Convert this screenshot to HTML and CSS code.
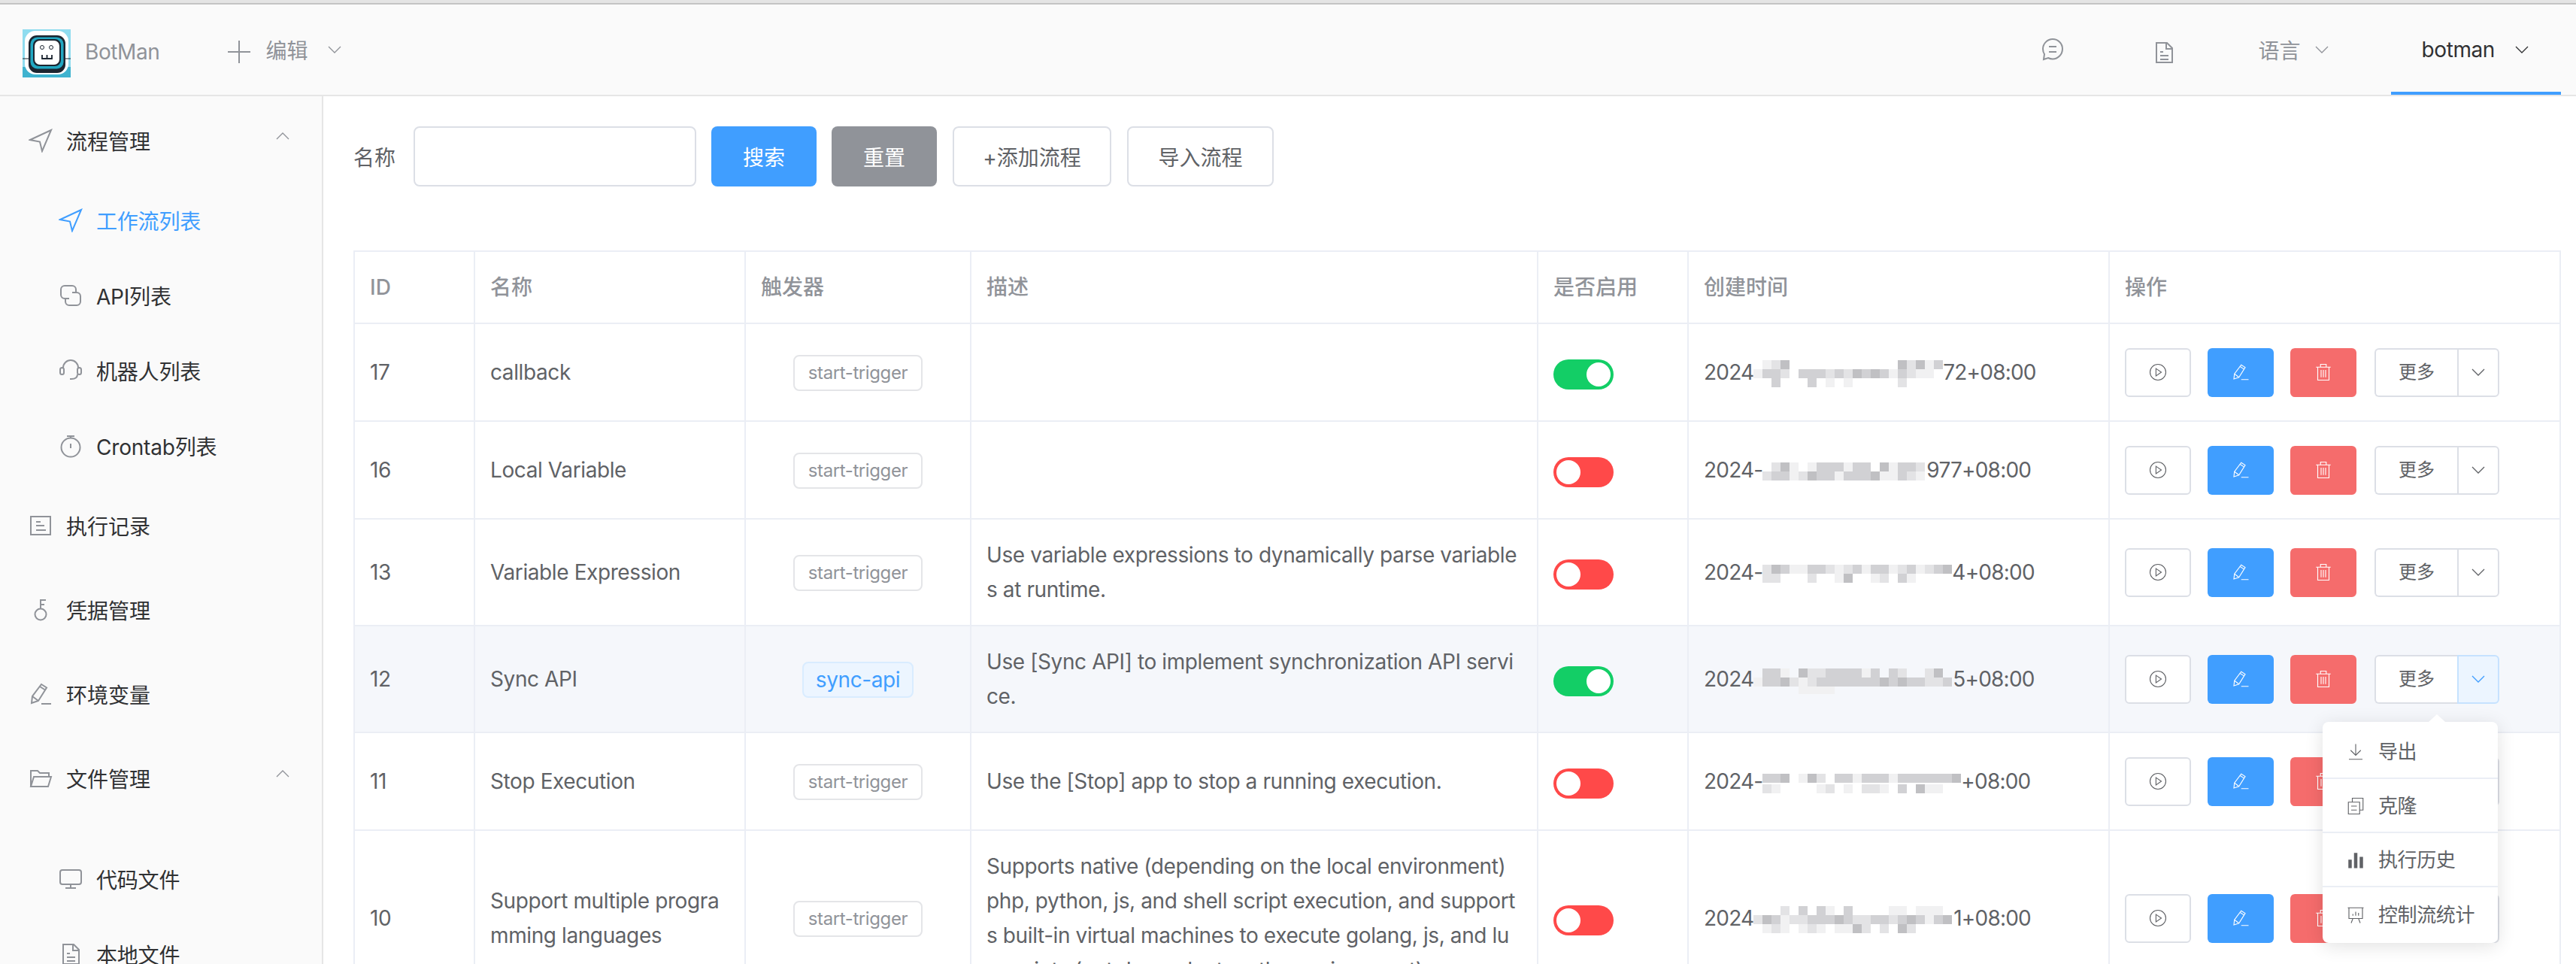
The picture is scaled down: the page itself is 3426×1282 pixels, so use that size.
FILE: index.html
```html
<!DOCTYPE html>
<html lang="zh-CN">
<head>
    <meta charset="UTF-8">
    <title>BotMan</title>
    <link rel="stylesheet" href="styles.css">
</head>
<body>
<svg class="sprite" xmlns="http://www.w3.org/2000/svg">
    <symbol id="i-nav" viewBox="0 0 32 32"><path d="M30 2 2 15l13 2.500L18 30z"/></symbol>
    <symbol id="i-link" viewBox="0 0 32 32"><path d="M14 20H8a5 5 0 0 1-5-5V8a5 5 0 0 1 5-5h10a5 5 0 0 1 5 5v4"/><path d="M18 12h6a5 5 0 0 1 5 5v7a5 5 0 0 1-5 5H14a5 5 0 0 1-5-5v-4"/></symbol>
    <symbol id="i-headset" viewBox="0 0 32 32"><path d="M6 12a10 10 0 0 1 20 0"/><rect x="2" y="12" width="5" height="9" rx="2.500"/><rect x="25" y="12" width="5" height="9" rx="2.500"/><path d="M25 21c0 4-3 6-8 6h-2"/></symbol>
    <symbol id="i-timer" viewBox="0 0 32 32"><circle cx="16" cy="18" r="12.500"/><path d="M11 3h10M16 3v3M16 13v6"/></symbol>
    <symbol id="i-tickets" viewBox="0 0 32 32"><path d="M3 4h26v24H3z"/><path d="M10 11h6M10 16h11M10 22h13"/></symbol>
    <symbol id="i-key" viewBox="0 0 32 32"><circle cx="16" cy="22" r="7.500"/><path d="M16 14V3h7M16 9h5"/></symbol>
    <symbol id="i-pencil" viewBox="0 0 32 32"><path d="M17 3l7 4.500L13 25l-9 3 1-9z"/><path d="M5 19l8 6M15 6l7 4.500M17 29h13"/></symbol>
    <symbol id="i-folder" viewBox="0 0 32 32"><path d="M3 27V6h9l3 3h12v5"/><path d="M3 27h23l4-13H7z"/></symbol>
    <symbol id="i-monitor" viewBox="0 0 32 32"><rect x="2" y="4" width="28" height="19" rx="3"/><path d="M16 23v5M9 28h14"/></symbol>
    <symbol id="i-doc" viewBox="0 0 32 32"><path d="M6 3h14l7 7v19H6z"/><path d="M19 3v8h8M11 15h4M11 20h11M11 25h11"/></symbol>
    <symbol id="i-chat" viewBox="0 0 32 32"><path d="M16 2C9 2 3 8 3 15c0 3 .500 5 2 7l-1 7 6-2c2 1 4 1.500 6 1.500 7 0 13-6 13-13.500S23 2 16 2z"/><path d="M11 12h10M11 19h10"/></symbol>
    <symbol id="i-play" viewBox="0 0 32 32"><circle cx="16" cy="16" r="14"/><path d="M12.500 9.500 22 16l-9.500 6.500z"/></symbol>
    <symbol id="i-trash" viewBox="0 0 32 32"><path d="M3 7h26M11 7V2h10v5M6 7v23h20V7M12 12v13M16 12v13M20 12v13"/></symbol>
    <symbol id="i-down" viewBox="0 0 18 10"><path d="M1 1l8 8 8-8"/></symbol>
    <symbol id="i-up" viewBox="0 0 18 10"><path d="M1 9l8-8 8 8"/></symbol>
    <symbol id="i-plus" viewBox="0 0 30 30"><path d="M15 0v30M0 15h30"/></symbol>
    <symbol id="i-download" viewBox="0 0 32 32"><path d="M16 2v20M7 13l9 9 9-9M4 29h24"/></symbol>
    <symbol id="i-copy" viewBox="0 0 32 32"><path d="M3 9h20v21H3z"/><path d="M10 9V2h19v21h-6M8 16h10M8 23h10"/></symbol>
    <symbol id="i-board" viewBox="0 0 32 32"><path d="M2 3h28M4 3v19h24V3M11 22l-3 8M21 22l3 8M11 17v-3M16 17v-7M21 17v-5"/></symbol>
</svg>

<div class="top-line"></div>

<header class="header">
    <svg class="logo" viewBox="0 0 64 64">
        <rect width="64" height="64" fill="#8fdcef"/>
        <rect y="50" width="64" height="14" fill="#3fb3cf"/>
        <rect x="3" y="2" width="58" height="58" rx="14" fill="#fff"/>
        <path d="M0 39h64" stroke="#1c2530" stroke-width="1"/>
        <rect x="8" y="8" width="49" height="50" rx="11" fill="#1c2530"/>
        <rect x="10.500" y="10.500" width="44" height="42" rx="9" fill="#22a7c2"/>
        <rect x="14" y="13" width="37" height="36" rx="8" fill="#1c2530"/>
        <rect x="16" y="15" width="33" height="32" rx="7" fill="#fff"/>
        <circle cx="26" cy="24" r="2.500" fill="#fff" stroke="#1c2530"/>
        <circle cx="38" cy="24" r="2.500" fill="#fff" stroke="#1c2530"/>
        <path d="M26 34v5h13v-5M32.500 34v5" fill="none" stroke="#1c2530" stroke-width="1.800"/>
    </svg>
    <span class="brand">BotMan</span>
    <svg class="icon header-plus"><use href="#i-plus"/></svg>
    <span class="header-edit">编辑</span>
    <svg class="icon chev"><use href="#i-down"/></svg>

    <div class="header-right">
        <svg class="icon header-chat"><use href="#i-chat"/></svg>
        <svg class="icon header-doc"><use href="#i-doc"/></svg>
        <div class="header-lang">语言 <svg class="icon chev"><use href="#i-down"/></svg></div>
        <div class="header-user">botman <svg class="icon chev"><use href="#i-down"/></svg></div>
    </div>
</header>

<div class="layout">
    <aside class="sidebar">
        <div class="menu-title"><svg class="icon menu-icon"><use href="#i-nav"/></svg>流程管理<svg class="icon menu-arrow"><use href="#i-up"/></svg></div>
        <div class="menu-sub active"><svg class="icon menu-icon"><use href="#i-nav"/></svg>工作流列表</div>
        <div class="menu-sub"><svg class="icon menu-icon"><use href="#i-link"/></svg>API列表</div>
        <div class="menu-sub"><svg class="icon menu-icon"><use href="#i-headset"/></svg>机器人列表</div>
        <div class="menu-sub"><svg class="icon menu-icon"><use href="#i-timer"/></svg>Crontab列表</div>
        <div class="menu-title"><svg class="icon menu-icon"><use href="#i-tickets"/></svg>执行记录</div>
        <div class="menu-title"><svg class="icon menu-icon"><use href="#i-key"/></svg>凭据管理</div>
        <div class="menu-title"><svg class="icon menu-icon"><use href="#i-pencil"/></svg>环境变量</div>
        <div class="menu-title"><svg class="icon menu-icon"><use href="#i-folder"/></svg>文件管理<svg class="icon menu-arrow"><use href="#i-up"/></svg></div>
        <div class="menu-group-gap"></div>
        <div class="menu-sub"><svg class="icon menu-icon"><use href="#i-monitor"/></svg>代码文件</div>
        <div class="menu-sub"><svg class="icon menu-icon"><use href="#i-doc"/></svg>本地文件</div>
    </aside>

    <main class="main">
        <div class="filter">
            <label class="filter-label">名称</label>
            <input class="filter-input" type="text">
            <button class="btn btn-primary">搜索</button>
            <button class="btn btn-grey">重置</button>
            <button class="btn btn-plain btn-add">+添加流程</button>
            <button class="btn btn-plain btn-import">导入流程</button>
        </div>

        <table class="flow-table">
            <colgroup>
                <col class="c-id"><col class="c-name"><col class="c-trigger"><col class="c-desc"><col class="c-on"><col class="c-time"><col class="c-op">
            </colgroup>
            <thead>
                <tr><th>ID</th><th>名称</th><th>触发器</th><th>描述</th><th>是否启用</th><th>创建时间</th><th>操作</th></tr>
            </thead>
            <tbody>
                <tr>
                    <td>17</td><td>callback</td>
                    <td class="center"><span class="tag">start-trigger</span></td>
                    <td class="desc"></td>
                    <td><span class="switch on"></span></td>
                    <td class="time">2024<svg class="mosaic m17"><path class="t1" d="M12 6h12M228 6h12M0 18h12M180 18h12M216 18h24M96 30h12M120 30h12"/><path class="t2" d="M24 6h12M204 6h12M36 18h12M96 18h12M120 18h12M204 18h12M192 30h12"/><path class="t3" d="M240 6h12M12 18h24M60 18h36M108 18h12M144 18h12M168 18h12M192 18h12M24 30h12M72 30h12"/><path class="t4" d="M36 6h12M192 6h12M216 6h12M132 18h12M156 18h12"/></svg>72+08:00</td>
                    <td><div class="ops"><button class="op op-plain"><svg class="icon"><use href="#i-play"/></svg></button><button class="op op-blue"><svg class="icon"><use href="#i-pencil"/></svg></button><button class="op op-red"><svg class="icon"><use href="#i-trash"/></svg></button><div class="split"><button class="split-main">更多</button><button class="split-arrow"><svg class="icon chev-small"><use href="#i-down"/></svg></button></div></div></td>
                </tr>
                <tr>
                    <td>16</td><td>Local Variable</td>
                    <td class="center"><span class="tag">start-trigger</span></td>
                    <td class="desc"></td>
                    <td><span class="switch off"></span></td>
                    <td class="time">2024-<svg class="mosaic m16"><path class="t1" d="M36 12h12M60 12h12M108 12h12M168 12h12M36 24h12M96 24h12M156 24h24M204 24h12"/><path class="t2" d="M12 12h12M204 12h12M0 24h12M48 24h12M192 24h12"/><path class="t3" d="M72 12h36M120 12h24M180 12h24M12 24h24M72 24h24M108 24h36M180 24h12"/><path class="t4" d="M24 12h12M156 12h12M60 24h12M144 24h12"/></svg>977+08:00</td>
                    <td><div class="ops"><button class="op op-plain"><svg class="icon"><use href="#i-play"/></svg></button><button class="op op-blue"><svg class="icon"><use href="#i-pencil"/></svg></button><button class="op op-red"><svg class="icon"><use href="#i-trash"/></svg></button><div class="split"><button class="split-main">更多</button><button class="split-arrow"><svg class="icon chev-small"><use href="#i-down"/></svg></button></div></div></td>
                </tr>
                <tr>
                    <td>13</td><td>Variable Expression</td>
                    <td class="center"><span class="tag">start-trigger</span></td>
                    <td class="desc">Use variable expressions to dynamically parse variables at runtime.</td>
                    <td><span class="switch off"></span></td>
                    <td class="time">2024-<svg class="mosaic m13"><path class="t1" d="M36 12h24M96 12h12M132 12h12M168 12h12M204 12h12M96 24h12M144 24h12M192 24h12"/><path class="t2" d="M0 12h12M84 12h12M108 12h12M180 12h12M216 12h12M0 24h24M60 24h12M156 24h12"/><path class="t3" d="M24 12h12M60 12h24M120 12h12M144 12h24M192 12h12M228 12h12M180 24h12"/><path class="t4" d="M12 12h12M240 12h12M108 24h12"/></svg>4+08:00</td>
                    <td><div class="ops"><button class="op op-plain"><svg class="icon"><use href="#i-play"/></svg></button><button class="op op-blue"><svg class="icon"><use href="#i-pencil"/></svg></button><button class="op op-red"><svg class="icon"><use href="#i-trash"/></svg></button><div class="split"><button class="split-main">更多</button><button class="split-arrow"><svg class="icon chev-small"><use href="#i-down"/></svg></button></div></div></td>
                </tr>
                <tr class="hover">
                    <td>12</td><td>Sync API</td>
                    <td class="center"><span class="tag tag-api">sync-api</span></td>
                    <td class="desc">Use [Sync API] to implement synchronization API service.</td>
                    <td><span class="switch on"></span></td>
                    <td class="time">2024<svg class="mosaic m12"><path class="t1" d="M36 8h12M144 8h12M0 20h12M60 20h12M60 32h48"/><path class="t2" d="M72 8h24M192 8h12M228 8h12M48 20h12M72 20h12M228 20h24"/><path class="t3" d="M12 8h24M96 8h48M156 8h12M180 8h12M12 20h24M84 20h84M180 20h12M204 20h24M252 20h12"/><path class="t4" d="M60 8h12M240 8h12M36 20h12M168 20h12M192 20h12"/></svg>5+08:00</td>
                    <td><div class="ops"><button class="op op-plain"><svg class="icon"><use href="#i-play"/></svg></button><button class="op op-blue"><svg class="icon"><use href="#i-pencil"/></svg></button><button class="op op-red"><svg class="icon"><use href="#i-trash"/></svg></button>
                        <div class="split"><button class="split-main">更多</button><button class="split-arrow open"><svg class="icon chev-small"><use href="#i-down"/></svg></button>
                            <ul class="more-menu">
                                <li><svg class="icon"><use href="#i-download"/></svg>导出</li>
                                <li><svg class="icon"><use href="#i-copy"/></svg>克隆</li>
                                <li><svg class="icon icon-fill" viewBox="0 0 32 32"><rect x="3" y="15" width="6" height="15"/><rect x="13" y="3" width="6" height="27"/><rect x="23" y="10" width="6" height="20"/></svg>执行历史</li>
                                <li><svg class="icon"><use href="#i-board"/></svg>控制流统计</li>
                            </ul>
                        </div></div></td>
                </tr>
                <tr>
                    <td>11</td><td>Stop Execution</td>
                    <td class="center"><span class="tag">start-trigger</span></td>
                    <td class="desc">Use the [Stop] app to stop a running execution.</td>
                    <td><span class="switch off"></span></td>
                    <td class="time">2024-<svg class="mosaic m11"><path class="t1" d="M48 12h12M120 12h12M168 12h12M12 26h12M72 26h12M108 26h12M156 26h12M216 26h24"/><path class="t2" d="M72 12h12M0 26h12M84 26h12M132 26h24"/><path class="t3" d="M0 12h24M96 12h24M132 12h36M180 12h72M180 26h12"/><path class="t4" d="M24 12h12M60 12h12M252 12h12M204 26h12"/></svg>+08:00</td>
                    <td><div class="ops"><button class="op op-plain"><svg class="icon"><use href="#i-play"/></svg></button><button class="op op-blue"><svg class="icon"><use href="#i-pencil"/></svg></button><button class="op op-red"><svg class="icon"><use href="#i-trash"/></svg></button><div class="split"><button class="split-main">更多</button><button class="split-arrow"><svg class="icon chev-small"><use href="#i-down"/></svg></button></div></div></td>
                </tr>
                <tr>
                    <td>10</td><td>Support multiple programming languages</td>
                    <td class="center"><span class="tag">start-trigger</span></td>
                    <td class="desc">Supports native (depending on the local environment) php, python, js, and shell script execution, and supports built-in virtual machines to execute golang, js, and lua scripts (not dependent on the environment).</td>
                    <td><span class="switch off"></span></td>
                    <td class="time">2024<svg class="mosaic m10"><path class="t1" d="M96 6h12M180 6h24M216 6h36M36 18h12M228 18h12M12 30h12M36 30h12M60 30h12M84 30h12M108 30h24"/><path class="t2" d="M36 6h12M0 18h12M48 18h24M132 18h24M180 18h12M24 30h12M72 30h12M144 30h12M168 30h12M204 30h12"/><path class="t3" d="M60 6h12M84 6h12M120 6h12M24 18h12M72 18h36M120 18h12M156 18h24M192 18h12M216 18h12M240 18h12"/><path class="t4" d="M12 18h12M108 18h12M204 18h12M252 18h12M132 30h12M192 30h12"/></svg>1+08:00</td>
                    <td><div class="ops"><button class="op op-plain"><svg class="icon"><use href="#i-play"/></svg></button><button class="op op-blue"><svg class="icon"><use href="#i-pencil"/></svg></button><button class="op op-red"><svg class="icon"><use href="#i-trash"/></svg></button><div class="split"><button class="split-main">更多</button><button class="split-arrow"><svg class="icon chev-small"><use href="#i-down"/></svg></button></div></div></td>
                </tr>
            </tbody>
        </table>
    </main>
</div>
</body>
</html>
```
FILE: styles.css
```css
* {
    box-sizing: border-box;
}

html, body {
    height: 100%;
    margin: 0;
    overflow: hidden;
}

body {
    display: flex;
    flex-direction: column;
    font-family: Inter, "Noto Sans CJK SC", sans-serif;
    font-size: 28px;
    color: #606266;
    background-color: #fff;
}

.sprite {
    display: none;
}

.icon {
    fill: none;
    stroke: currentColor;
    stroke-width: 2;
    flex-shrink: 0;
}

.icon-fill {
    fill: currentColor;
    stroke: none;
}

.top-line {
    height: 6px;
    flex-shrink: 0;
    background-color: #e4e4e4;
    border-bottom: 2px solid #c4c4c4;
}

/* 顶部导航 */
.header {
    display: flex;
    align-items: center;
    height: 122px;
    flex-shrink: 0;
    padding-left: 30px;
    background-color: #fafafa;
    border-bottom: 2px solid #e6e6e6;
    color: #909399;
}

.logo {
    width: 64px;
    height: 64px;
    margin-top: 9px;
}

.brand {
    margin-left: 19px;
    margin-top: 6px;
    letter-spacing: -0.4px;
}

.header-plus {
    width: 30px;
    height: 30px;
    margin: 6px 0 0 91px;
}

.header-edit {
    margin-left: 20px;
}

.chev {
    width: 18px;
    height: 10px;
    stroke-width: 1.300;
}

.header-edit + .chev {
    margin-left: 27px;
}

.header-right {
    display: flex;
    align-items: center;
    height: 120px;
    margin-left: auto;
    margin-right: 20px;
}

.header-chat {
    width: 32px;
    height: 32px;
}

.header-doc {
    width: 32px;
    height: 32px;
    margin: 8px 0 0 116px;
}

.header-lang {
    display: flex;
    align-items: center;
    gap: 19px;
    margin-left: 109px;
}

.header-user {
    display: flex;
    align-items: center;
    gap: 27px;
    height: 120px;
    margin-left: 83px;
    padding: 4px 43px 0 41px;
    letter-spacing: -0.4px;
    color: #303133;
    border-bottom: 4px solid #409eff;
}

/* 侧边菜单 */
.layout {
    display: flex;
    flex: 1;
    min-height: 0;
}

.sidebar {
    width: 430px;
    flex-shrink: 0;
    padding-top: 3px;
    background-color: #fafafa;
    border-right: 2px solid #e6e6e6;
    color: #303133;
}

.menu-title, .menu-sub {
    display: flex;
    align-items: center;
    gap: 18px;
}

.menu-title {
    height: 112px;
    padding: 0 43px 0 38px;
}

.menu-sub {
    height: 100px;
    padding-left: 78px;
    letter-spacing: -0.2px;
}

.menu-sub.active {
    color: #409eff;
}

.menu-icon {
    width: 32px;
    height: 32px;
    color: #909399;
}

.active .menu-icon {
    color: #409eff;
}

.menu-arrow {
    width: 18px;
    height: 10px;
    margin: -12px 0 0 auto;
    color: #909399;
    stroke-width: 1.300;
}

.menu-group-gap {
    height: 28px;
}

/* 内容区 */
.main {
    flex: 1;
    min-width: 0;
    padding: 40px 20px 0 40px;
}

.filter {
    display: flex;
    align-items: center;
    height: 80px;
    margin-bottom: 85px;
}

.filter-label {
    width: 80px;
}

.filter-input {
    width: 376px;
    height: 80px;
    margin-right: 20px;
    border: 2px solid #dcdfe6;
    border-radius: 8px;
    background-color: #fff;
}

.btn {
    height: 80px;
    font: inherit;
    border-radius: 8px;
    border: 2px solid transparent;
    color: #fff;
}

.btn-primary {
    width: 140px;
    margin-right: 20px;
    background-color: #409eff;
}

.btn-grey {
    width: 140px;
    margin-right: 21px;
    background-color: #909399;
}

.btn-plain {
    background-color: #fff;
    border-color: #dcdfe6;
    color: #606266;
}

.btn-add {
    width: 211px;
    margin-right: 21px;
}

.btn-import {
    width: 195px;
}

.flow-table {
    width: 2936px;
    table-layout: fixed;
    border-collapse: separate;
    border-spacing: 0;
    border-top: 2px solid #ebeef5;
    border-left: 2px solid #ebeef5;
    background-color: #fff;
}

.c-id { width: 160px; }
.c-name { width: 360px; }
.c-trigger { width: 300px; }
.c-desc { width: 754px; }
.c-on { width: 200px; }
.c-time { width: 560px; }
.c-op { width: 600px; }

.flow-table th, .flow-table td {
    padding: 24px 20px;
    line-height: 46px;
    text-align: left;
    word-break: break-all;
    border-right: 2px solid #ebeef5;
    border-bottom: 2px solid #ebeef5;
}

.flow-table th {
    height: 96px;
    padding-top: 0;
    padding-bottom: 0;
    font-weight: 500;
    color: #909399;
}

.flow-table td {
    height: 130px;
    letter-spacing: -0.4px;
}

.flow-table td.center {
    text-align: center;
}

.flow-table td.desc {
    padding-right: 23px;
}

.flow-table td.time {
    white-space: nowrap;
    letter-spacing: -0.8px;
}

.hover td {
    background-color: #f5f7fb;
}

.tag {
    display: inline-block;
    height: 48px;
    padding: 0 18px;
    font-size: 24px;
    line-height: 44px;
    color: #909399;
    background-color: #fff;
    border: 2px solid #e4e5e8;
    border-radius: 8px;
    vertical-align: middle;
}

.tag-api {
    padding: 0 16px;
    font-size: 28px;
    color: #409eff;
    background-color: #ecf5ff;
    border-color: #d9ecff;
}

.switch {
    position: relative;
    display: block;
    width: 80px;
    height: 40px;
    margin-top: 6px;
    border-radius: 20px;
}

.switch::after {
    content: "";
    position: absolute;
    top: 4px;
    width: 32px;
    height: 32px;
    border-radius: 50%;
    background-color: #fff;
}

.switch.on {
    background-color: #13ce66;
}

.switch.on::after {
    right: 4px;
}

.switch.off {
    background-color: #ff4949;
}

.switch.off::after {
    left: 4px;
}

/* 打码的时间 */
.mosaic {
    height: 36px;
    vertical-align: middle;
    fill: none;
    stroke-width: 12;
}

.m17 { width: 252px; }
.m16 { width: 218px; }
.m13 { width: 252px; }
.m12 { width: 265px; }
.m11 { width: 264px; }
.m10 { width: 266px; }

.t1 { stroke: #f1f1f2; }
.t2 { stroke: #e3e3e5; }
.t3 { stroke: #d1d1d4; }
.t4 { stroke: #c0c0c3; }

/* 操作按钮 */
.ops {
    display: flex;
    align-items: center;
    gap: 22px;
}

.op {
    display: flex;
    align-items: center;
    justify-content: center;
    width: 88px;
    height: 65px;
    padding: 0;
    border-radius: 6px;
    border: 2px solid transparent;
}

.op .icon {
    width: 24px;
    height: 24px;
    stroke-width: 1.500;
}

.op-plain {
    background-color: #fff;
    border-color: #dcdfe6;
    color: #606266;
}

.op-blue {
    background-color: #409eff;
    color: #fff;
}

.op-red {
    background-color: #f56c6c;
    color: #fff;
}

.split {
    position: relative;
    display: flex;
    margin-left: 2px;
}

.split-main {
    width: 110px;
    height: 65px;
    padding: 0;
    font: inherit;
    font-size: 24px;
    color: #606266;
    background-color: #fff;
    border: 2px solid #dcdfe6;
    border-right: 0;
    border-radius: 6px 0 0 6px;
}

.split-arrow {
    display: flex;
    align-items: center;
    justify-content: center;
    width: 56px;
    height: 65px;
    padding: 0;
    color: #606266;
    background-color: #fff;
    border: 2px solid #dcdfe6;
    border-radius: 0 6px 6px 0;
}

.split-arrow.open {
    color: #409eff;
    background-color: #ecf5ff;
    border-color: #c6e2ff;
}

.chev-small {
    width: 18px;
    height: 10px;
    stroke-width: 1.300;
}

.more-menu {
    position: absolute;
    top: calc(100% + 24px);
    right: 2px;
    z-index: 5;
    width: 233px;
    margin: 0;
    padding: 4px 0 2px;
    list-style: none;
    font-size: 26px;
    line-height: 36px;
    background-color: #fff;
    border-radius: 8px;
    box-shadow: 0 4px 24px rgba(0, 0, 0, 0.12);
}

.more-menu::before {
    content: "";
    position: absolute;
    top: -10px;
    right: 70px;
    border-left: 11px solid transparent;
    border-right: 11px solid transparent;
    border-bottom: 10px solid #fff;
}

.more-menu li {
    display: flex;
    align-items: center;
    gap: 18px;
    height: 72px;
    padding: 2px 0 0 32px;
    border-bottom: 2px solid #ebeef5;
}

.more-menu li:last-child {
    border-bottom: 0;
}

.more-menu .icon {
    width: 24px;
    height: 24px;
    stroke-width: 1.500;
}

.more-menu .icon-fill {
    stroke: none;
}
```
